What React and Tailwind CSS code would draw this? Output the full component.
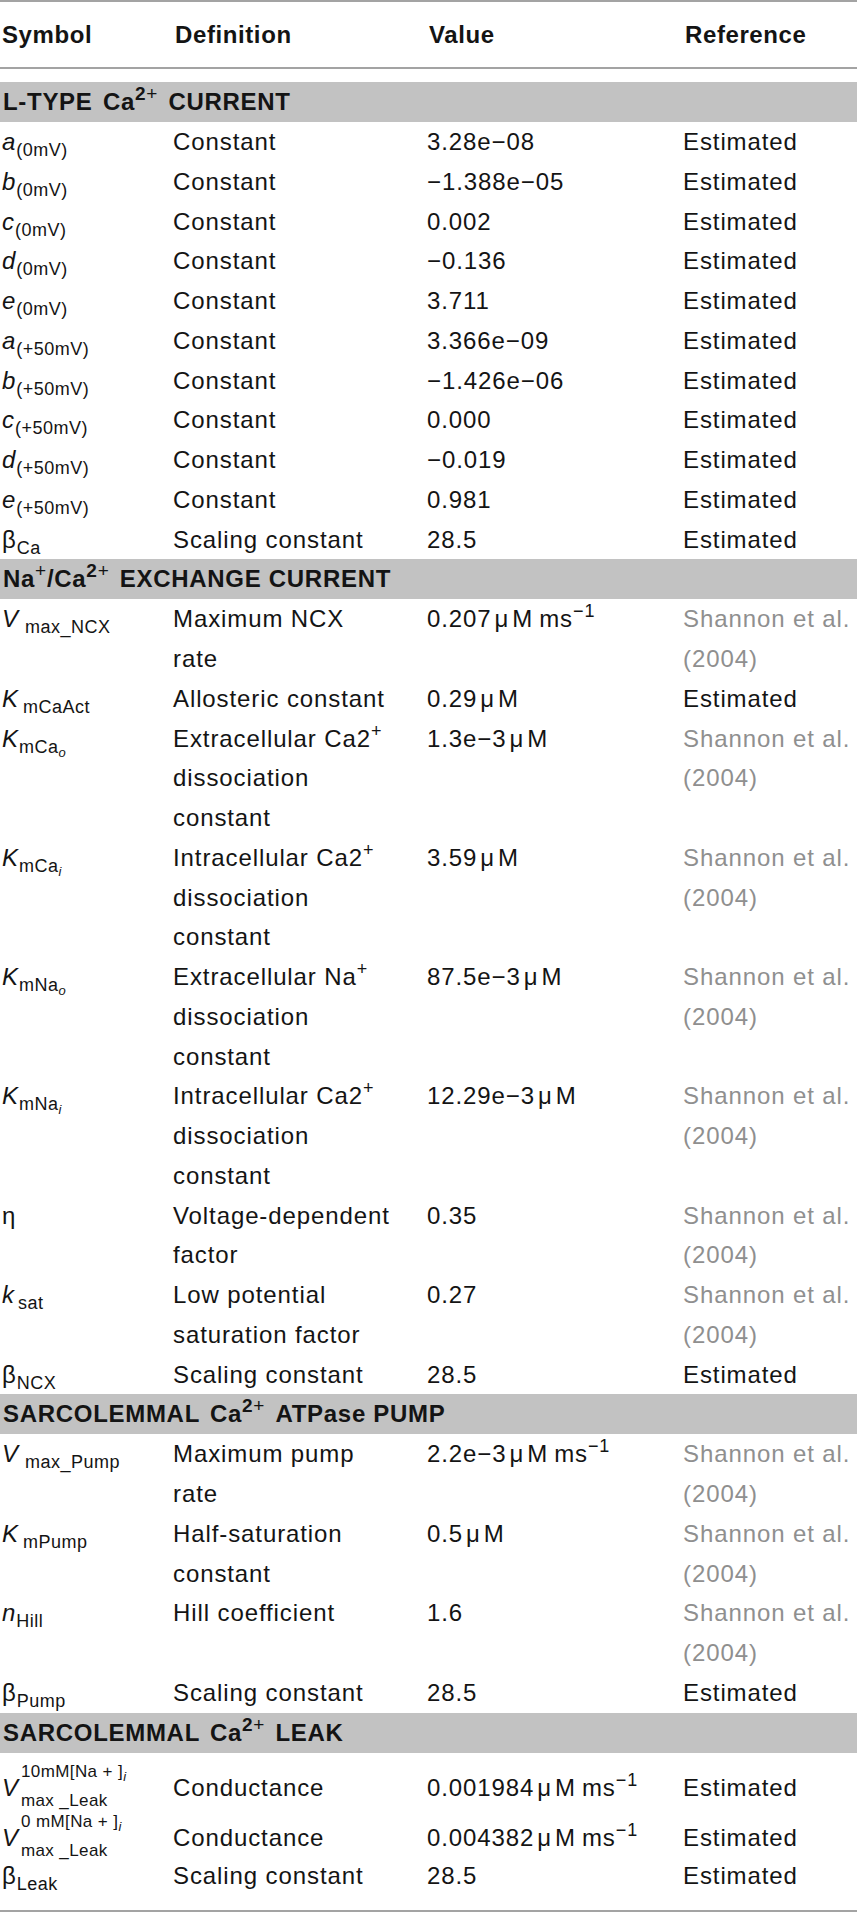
const grayRef = ['Shannon et al.', '(2004)'];

function Sub({ children, className = '' }) {
  return <span className={`text-[18px] not-italic leading-none align-[-6px] tracking-[0.5px] ${className}`}>{children}</span>;
}

function SubSub({ children }) {
  return <span className="text-[13px] italic leading-none align-[-4px]">{children}</span>;
}

function Sup({ children, className = '' }) {
  return <span className={`text-[18px] leading-none align-[10px] ${className}`}>{children}</span>;
}

function It({ children }) {
  return <span className="italic">{children}</span>;
}

function Um() {
  return <span className="mx-[3px]">μ</span>;
}

function PerMs() {
  return (
    <>
      M<span className="ml-[6px]">ms</span>
      <Sup>−1</Sup>
    </>
  );
}

function Band({ children }) {
  return (
    <div className="flex h-[40px] items-center bg-[#c2c2c2] pl-[3px] font-bold tracking-[0.7px]">
      <span>{children}</span>
    </div>
  );
}

function Ca() {
  return (
    <>
      Ca<Sup className="text-[19px] font-bold">2</Sup>
      <Sup className="text-[19px] font-normal">+</Sup>
    </>
  );
}

function Row({ sym, def, val, refs = ['Estimated'], className = '' }) {
  const gray = refs[0] !== 'Estimated';
  return (
    <div className={`grid grid-cols-[173px_254px_256px_1fr] leading-[39.75px] ${className}`}>
      <div className="pl-[2px]">{sym}</div>
      <div>
        {def.map((l, i) => (
          <div key={i}>{l}</div>
        ))}
      </div>
      <div>{val}</div>
      <div className={gray ? 'text-[#8f8f8f]' : ''}>
        {refs.map((l, i) => (
          <div key={i}>{l}</div>
        ))}
      </div>
    </div>
  );
}

function Leak({ top }) {
  return (
    <div className="flex h-[39.75px] items-center">
      <span className="italic">V</span>
      <div className="mt-[-3px] ml-[2px] flex flex-col text-[17px] leading-[29px] tracking-[0.4px]">
        <span>
          {top}mM[Na + ]<SubSub>i</SubSub>
        </span>
        <span>max _Leak</span>
      </div>
    </div>
  );
}

const ltype = [
  ['a', '(0mV)', '3.28e−08'],
  ['b', '(0mV)', '−1.388e−05'],
  ['c', '(0mV)', '0.002'],
  ['d', '(0mV)', '−0.136'],
  ['e', '(0mV)', '3.711'],
  ['a', '(+50mV)', '3.366e−09'],
  ['b', '(+50mV)', '−1.426e−06'],
  ['c', '(+50mV)', '0.000'],
  ['d', '(+50mV)', '−0.019'],
  ['e', '(+50mV)', '0.981'],
];

export default function App() {
  return (
    <div className="w-[857px] bg-white font-['Liberation_Sans',Arial,sans-serif] text-[24px] tracking-[0.9px] text-[#141414]">
      <div className="h-[2px] bg-[#a3a3a3]" />
      <div className="grid h-[65px] grid-cols-[173px_254px_256px_1fr] items-center pl-[2px] font-bold tracking-[0.6px]">
        <div>Symbol</div>
        <div>Definition</div>
        <div>Value</div>
        <div>Reference</div>
      </div>
      <div className="h-[2px] bg-[#a3a3a3]" />

      <div className="mt-[13px]">
        <Band>
          L-TYPE <span className="ml-[3px]"><Ca /></span> <span className="ml-[3px]">CURRENT</span>
        </Band>
        {ltype.map(([s, sub, v], i) => (
          <Row
            key={i}
            sym={
              <>
                <It>{s}</It>
                <Sub>{sub}</Sub>
              </>
            }
            def={['Constant']}
            val={v}
          />
        ))}
        <Row
          sym={
            <>
              β<Sub>Ca</Sub>
            </>
          }
          def={['Scaling constant']}
          val="28.5"
        />

        <Band>
          Na<Sup className="text-[19px] font-normal">+</Sup>/<Ca /> <span className="ml-[3px]">EXCHANGE CURRENT</span>
        </Band>
        <Row
          sym={
            <>
              <It>V</It>
              <Sub className="ml-[6px]">max_NCX</Sub>
            </>
          }
          def={['Maximum NCX', 'rate']}
          val={
            <>
              0.207
              <Um />
              <PerMs />
            </>
          }
          refs={grayRef}
        />
        <Row
          sym={
            <>
              <It>K</It>
              <Sub className="ml-[4px]">mCaAct</Sub>
            </>
          }
          def={['Allosteric constant']}
          val={
            <>
              0.29
              <Um />M
            </>
          }
        />
        <Row
          sym={
            <>
              <It>K</It>
              <Sub>
                mCa<SubSub>o</SubSub>
              </Sub>
            </>
          }
          def={[
            <>
              Extracellular Ca2<Sup>+</Sup>
            </>,
            'dissociation',
            'constant',
          ]}
          val={
            <>
              1.3e−3
              <Um />M
            </>
          }
          refs={grayRef}
        />
        <Row
          sym={
            <>
              <It>K</It>
              <Sub>
                mCa<SubSub>i</SubSub>
              </Sub>
            </>
          }
          def={[
            <>
              Intracellular Ca2<Sup>+</Sup>
            </>,
            'dissociation',
            'constant',
          ]}
          val={
            <>
              3.59
              <Um />M
            </>
          }
          refs={grayRef}
        />
        <Row
          sym={
            <>
              <It>K</It>
              <Sub>
                mNa<SubSub>o</SubSub>
              </Sub>
            </>
          }
          def={[
            <>
              Extracellular Na<Sup>+</Sup>
            </>,
            'dissociation',
            'constant',
          ]}
          val={
            <>
              87.5e−3
              <Um />M
            </>
          }
          refs={grayRef}
        />
        <Row
          sym={
            <>
              <It>K</It>
              <Sub>
                mNa<SubSub>i</SubSub>
              </Sub>
            </>
          }
          def={[
            <>
              Intracellular Ca2<Sup>+</Sup>
            </>,
            'dissociation',
            'constant',
          ]}
          val={
            <>
              12.29e−3
              <Um />M
            </>
          }
          refs={grayRef}
        />
        <Row sym="η" def={['Voltage-dependent', 'factor']} val="0.35" refs={grayRef} />
        <Row
          sym={
            <>
              <It>k</It>
              <Sub className="ml-[3px]">sat</Sub>
            </>
          }
          def={['Low potential', 'saturation factor']}
          val="0.27"
          refs={grayRef}
        />
        <Row
          sym={
            <>
              β<Sub>NCX</Sub>
            </>
          }
          def={['Scaling constant']}
          val="28.5"
        />

        <Band>
          SARCOLEMMAL <span className="ml-[3px]"><Ca /></span> <span className="ml-[3px]">ATPase PUMP</span>
        </Band>
        <Row
          sym={
            <>
              <It>V</It>
              <Sub className="ml-[6px]">max_Pump</Sub>
            </>
          }
          def={['Maximum pump', 'rate']}
          val={
            <>
              2.2e−3
              <Um />
              <PerMs />
            </>
          }
          refs={grayRef}
        />
        <Row
          sym={
            <>
              <It>K</It>
              <Sub className="ml-[4px]">mPump</Sub>
            </>
          }
          def={['Half-saturation', 'constant']}
          val={
            <>
              0.5
              <Um />M
            </>
          }
          refs={grayRef}
        />
        <Row
          sym={
            <>
              <It>n</It>
              <Sub>Hill</Sub>
            </>
          }
          def={['Hill coefficient']}
          val="1.6"
          refs={grayRef}
        />
        <Row
          sym={
            <>
              β<Sub>Pump</Sub>
            </>
          }
          def={['Scaling constant']}
          val="28.5"
        />

        <Band>
          SARCOLEMMAL <span className="ml-[3px]"><Ca /></span> <span className="ml-[3px]">LEAK</span>
        </Band>
        <Row
          className="h-[60px] pt-[15px]"
          sym={<Leak top="10" />}
          def={['Conductance']}
          val={
            <>
              0.001984
              <Um />
              <PerMs />
            </>
          }
        />
        <Row
          className="h-[43px] pt-[5px]"
          sym={<Leak top="0 " />}
          def={['Conductance']}
          val={
            <>
              0.004382
              <Um />
              <PerMs />
            </>
          }
        />
        <Row
          sym={
            <>
              β<Sub>Leak</Sub>
            </>
          }
          def={['Scaling constant']}
          val="28.5"
        />
      </div>
      <div className="mt-[15px] h-[2px] bg-[#a3a3a3]" />
    </div>
  );
}
